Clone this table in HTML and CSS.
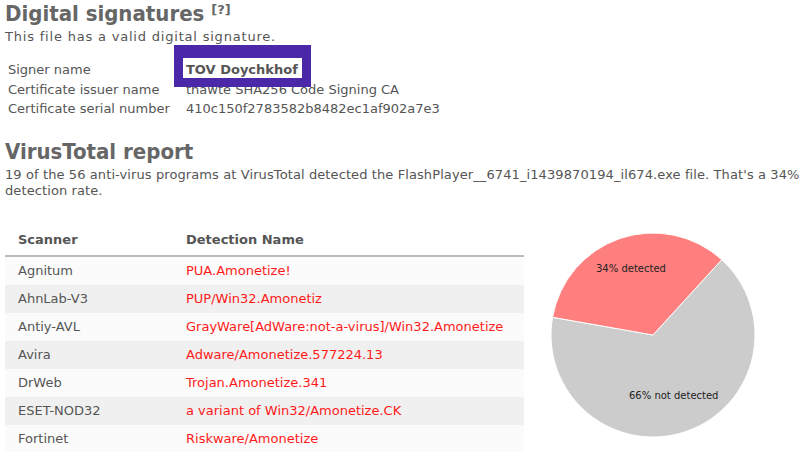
FILE: index.html
```html
<!DOCTYPE html>
<html>
<head>
<meta charset="utf-8">
<link rel="stylesheet" href="styles.css">
</head>
<body>
<section class="sig">
  <h2 class="title">Digital signatures <sup class="help">[?]</sup></h2>
  <p class="lead lead-sig">This file has a valid digital signature.</p>
  <div class="sig-table">
    <div class="label">Signer name</div>
    <div class="value"><span class="signer">TOV Doychkhof</span></div>
    <div class="label">Certificate issuer name</div>
    <div class="value">thawte SHA256 Code Signing CA</div>
    <div class="label">Certificate serial number</div>
    <div class="value">410c150f2783582b8482ec1af902a7e3</div>
  </div>
</section>
<section class="vt">
  <h2 class="title">VirusTotal report</h2>
  <p class="lead lead-vt">19 of the 56 anti-virus programs at VirusTotal detected the FlashPlayer__6741_i1439870194_il674.exe file. That's a 34% detection rate.</p>
  <div class="vt-body">
    <table class="scan">
      <thead>
        <tr><th class="c1">Scanner</th><th>Detection Name</th></tr>
      </thead>
      <tbody>
        <tr><td class="c1">Agnitum</td><td class="det">PUA.Amonetize!</td></tr>
        <tr><td class="c1">AhnLab-V3</td><td class="det">PUP/Win32.Amonetiz</td></tr>
        <tr><td class="c1">Antiy-AVL</td><td class="det">GrayWare[AdWare:not-a-virus]/Win32.Amonetize</td></tr>
        <tr><td class="c1">Avira</td><td class="det">Adware/Amonetize.577224.13</td></tr>
        <tr><td class="c1">DrWeb</td><td class="det">Trojan.Amonetize.341</td></tr>
        <tr><td class="c1">ESET-NOD32</td><td class="det">a variant of Win32/Amonetize.CK</td></tr>
        <tr><td class="c1">Fortinet</td><td class="det">Riskware/Amonetize</td></tr>
      </tbody>
    </table>
    <svg class="pie" width="206" height="206" viewBox="-1 -1 206 206">
      <path d="M102 102 L170.78 26.67 A102 102 0 1 1 1.55 84.29 Z" fill="#cccccc" stroke="#ffffff" stroke-width="1"/>
      <path d="M102 102 L1.55 84.29 A102 102 0 0 1 170.78 26.67 Z" fill="#ff7f7f" stroke="#ffffff" stroke-width="1"/>
      <text x="45" y="39" class="pie-label">34% detected</text>
      <text x="78" y="166" class="pie-label">66% not detected</text>
    </svg>
  </div>
</section>
</body>
</html>
```
FILE: styles.css
```css
html, body {
  margin: 0;
  padding: 0;
  background: #ffffff;
}
body {
  padding: 0 5px;
  font-family: "DejaVu Sans", Verdana, sans-serif;
  color: #555555;
  font-size: 13px;
}
.title {
  margin: 0;
  font-family: "DejaVu Sans Condensed", "DejaVu Sans", sans-serif;
  font-stretch: condensed;
  font-size: 22px;
  font-weight: bold;
  color: #666666;
  line-height: 28px;
}
.help {
  font-family: "DejaVu Sans", Verdana, sans-serif;
  font-stretch: normal;
  font-size: 13px;
  vertical-align: top;
  position: relative;
  top: -4px;
  color: #666666;
}
.lead {
  margin: 0;
  line-height: 16px;
}
.lead-sig {
  letter-spacing: 0.8px;
  margin-top: 1px;
}
.lead-vt {
  letter-spacing: 0.1px;
}
.sig .title {
  height: 28px;
}
.sig-table {
  display: grid;
  grid-template-columns: 178px auto;
  grid-auto-rows: 19.5px;
  align-items: center;
  margin-top: 15px;
  padding-left: 3px;
}
.signer {
  position: relative;
  font-weight: bold;
  color: #555555;
}
.signer::before {
  content: "";
  position: absolute;
  left: -12px;
  top: -17px;
  width: 137px;
  height: 42px;
  box-sizing: border-box;
  border-style: solid;
  border-color: #4a28a8;
  border-width: 13px 9px 9px 9px;
  pointer-events: none;
}
.vt {
  margin-top: 19px;
}
.vt .lead {
  margin-top: 1px;
}
.vt-body {
  display: flex;
  align-items: flex-start;
  margin-top: 26px;
}
.scan {
  width: 519px;
  border-collapse: collapse;
  font-size: 13px;
}
.scan th {
  text-align: left;
  font-weight: bold;
  color: #555555;
  height: 30px;
  padding: 0 0 0 13px;
  border-bottom: 2px solid #bbbbbb;
}
.scan td {
  height: 28px;
  padding: 0 0 0 13px;
}
.scan .c1 {
  width: 155px;
}
.scan tbody tr:nth-child(odd) {
  background: #fbfbfb;
}
.scan tbody tr:nth-child(even) {
  background: #f0f0f0;
}
.scan .det {
  color: #ff1a1a;
}
.pie {
  margin-left: 26px;
  margin-top: 7px;
}
.pie-label {
  font-family: "DejaVu Sans", Verdana, sans-serif;
  font-size: 10px;
  fill: #222222;
}
```
